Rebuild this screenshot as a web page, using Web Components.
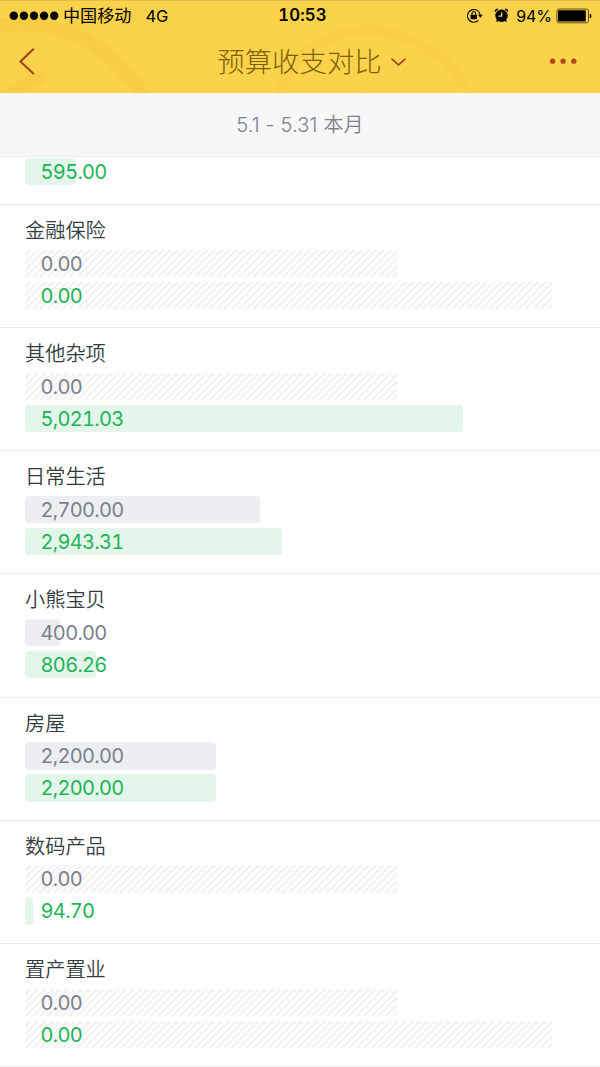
<!DOCTYPE html>
<html lang="zh-CN">
<head>
    <meta charset="UTF-8">
    <meta name="viewport" content="width=device-width, initial-scale=1.0">
    <title>预算收支对比</title>
    <style>
        body {
            margin: 0;
            height: 1067px;
            overflow: hidden;
            background-color: #fff;
            font-family: Inter, "Noto Sans CJK SC", sans-serif;
        }
    </style>
</head>
<body>
    <budget-page></budget-page>
    <script>
        class StatusBar extends HTMLElement {
            constructor() {
                super();
                this.attachShadow({ mode: 'open' });
                this.shadowRoot.innerHTML =
                    `<style>
                    :host {
                        display: grid;
                        grid-template-columns: 1fr auto 1fr;
                        align-items: center;
                        height: 31px;
                        padding: 0 8px 0 9px;
                        color: #000;
                        font-size: 16px;
                        line-height: 31px;
                    }
                    .left, .right { display: flex; align-items: center; }
                    .right { justify-content: flex-end; }
                    .carrier { margin-left: 4px; font-size: 17.1px; padding-top: 1px; line-height: 30px; }
                    .network { margin-left: 14px; font-size: 16.5px; padding-top: 1px; line-height: 30px; }
                    .time { padding: 0 0 0 4px; font-size: 16.8px; font-weight: 600; font-variant-numeric: tabular-nums; letter-spacing: .1px; }
                    .percent { margin: 0 4px 0 7px; padding-top: 1px; line-height: 30px; letter-spacing: -.05px; }
                    svg { display: block; flex: none; }
                    .clock { margin-left: 10px; }
                    </style>
                    <div class="left">
                        <svg width="50" height="10"><g><circle cx="4.8" cy="4.8" r="4.2"/><circle cx="14.9" cy="4.8" r="4.2"/><circle cx="25" cy="4.8" r="4.2"/><circle cx="35.1" cy="4.8" r="4.2"/><circle cx="45.2" cy="4.8" r="4.2"/></g></svg>
                        <span class="carrier">中国移动</span>
                        <span class="network">4G</span>
                    </div>
                    <div class="time">10:53</div>
                    <div class="right">
                        <svg width="18" height="16" viewBox="0 0 18 16">
                            <path d="M12.4 12.4A6.4 6.4 0 1 1 14.2 7" fill="none" stroke="#000" stroke-width="1.1"/>
                            <path d="M11.8 6.8H16.8L14.3 9.8Z"/>
                            <rect x="4.6" y="6.7" width="6.4" height="4.6" rx=".6"/>
                            <path d="M5.9 7V5.7a1.9 1.9 0 0 1 3.8 0V7" fill="none" stroke="#000" stroke-width="1.1"/>
                        </svg>
                        <svg class="clock" width="15" height="15" viewBox="0 0 15 15">
                            <circle cx="7.5" cy="7.8" r="6.2"/>
                            <path d="M1.2 3.6A3 3 0 0 1 4 1.2M13.8 3.6A3 3 0 0 0 11 1.2M3.8 12L2.6 13.7M11.2 12L12.4 13.7" fill="none" stroke="#000" stroke-width="1.4"/>
                            <path d="M7.7 4.2V8.2H4.4" fill="none" stroke="#fbd44d" stroke-width="1.3"/>
                        </svg>
                        <span class="percent">94%</span>
                        <svg width="36" height="16" viewBox="0 0 36 16">
                            <rect x=".9" y="1" width="31.6" height="13.8" rx="2" fill="none" stroke="#4b3e12" stroke-width=".9"/>
                            <rect x="2" y="2.2" width="27.8" height="11.4" rx="1"/>
                            <path d="M33.8 5.5a2.7 2.7 0 0 1 0 5z"/>
                        </svg>
                    </div>`;
            }
        }

        class NavBar extends HTMLElement {
            constructor() {
                super();
                this.attachShadow({ mode: 'open' });
                this.shadowRoot.innerHTML =
                    `<style>
                    :host {
                        display: grid;
                        grid-template-columns: 60px 1fr 60px;
                        align-items: center;
                        height: 62px;
                        color: #7d5f0b;
                    }
                    .title {
                        display: flex;
                        align-items: center;
                        justify-content: center;
                        padding-left: 24px;
                        font-size: 27.4px;
                        font-weight: 300;
                        line-height: 62px;
                    }
                    svg { display: block; fill: none; stroke: #a5401f; stroke-linecap: round; stroke-linejoin: round; }
                    .back { margin: -2px 0 0 18px; }
                    .arrow { margin-left: 8px; }
                    .more { fill: #b5431f; stroke: none; margin-left: 8px; }
                    </style>
                    <svg class="back" width="18" height="28" viewBox="0 0 18 28"><path d="M15.3 2.3L2.4 14.5L15.3 26.5" stroke-width="2.1"/></svg>
                    <div class="title"><slot></slot><svg class="arrow" width="17" height="10" viewBox="0 0 17 10"><path d="M2 2.2L8.6 7.8L15 2.2" stroke-width="1.7"/></svg></div>
                    <svg class="more" width="30" height="8"><circle cx="4.6" cy="3.2" r="2.6"/><circle cx="15.1" cy="3.2" r="2.6"/><circle cx="25.8" cy="3.2" r="2.6"/></svg>`;
            }
        }

        class PageHeader extends HTMLElement {
            constructor() {
                super();
                this.attachShadow({ mode: 'open' });
                this.shadowRoot.innerHTML =
                    `<style>
                    :host {
                        display: block;
                        position: relative;
                        height: 93px;
                        overflow: hidden;
                        background-color: #fbd34b;
                        box-shadow: inset 0 1px #e2bf49;
                    }
                    .rings { position: absolute; top: 0; left: 0; }
                    .content { position: relative; }
                    </style>
                    <svg class="rings" width="600" height="93" fill="none" stroke="#f6cb43" stroke-width="14" stroke-linecap="round" opacity=".65">
                        <path d="M-10 27C55 15 109 40 148 102"/>
                        <path d="M-5 101L41 77" stroke-width="13"/>
                        <path d="M279 100C296 8 432 8 471 99" stroke-width="10" opacity=".7"/>
                        <path d="M364 99Q373 76 395 79" stroke-width="8" opacity=".4"/>
                    </svg>
                    <div class="content"><slot></slot></div>`;
            }
        }

        class DateRange extends HTMLElement {
            constructor() {
                super();
                this.attachShadow({ mode: 'open' });
                this.shadowRoot.innerHTML =
                    `<style>
                    :host {
                        display: block;
                        box-sizing: border-box;
                        height: 64px;
                        border-bottom: 1px solid #ebebeb;
                        background-color: #f7f7f7;
                        color: #7b828d;
                        font-size: 20px;
                        font-weight: 350;
                        line-height: 65px;
                        text-align: center;
                        letter-spacing: .15px;
                    }
                    </style>
                    <slot></slot>`;
            }
        }

        class AmountBar extends HTMLElement {
            constructor() {
                super();
                this.attachShadow({ mode: 'open' });
                this.shadowRoot.innerHTML =
                    `<style>
                    :host {
                        display: grid;
                        grid-template-rows: 100%;
                        height: 27.4px;
                        color: #7a818c;
                        --fill: #edeef1;
                    }
                    :host([type="actual"]) { color: #1db458; --fill: #e4f5ea; }
                    .bar, .value { grid-area: 1 / 1; }
                    .bar {
                        width: var(--size);
                        border-radius: 4px;
                        background-color: var(--fill);
                    }
                    :host([empty]) .bar {
                        border-radius: 0;
                        background: repeating-linear-gradient(135deg, #fcfcfc 0 2.6px, #f0f0f0 3.6px 4.4px, #fcfcfc 5.2px);
                    }
                    .value {
                        padding-left: 15.6px;
                        font-size: 20px;
                        font-weight: 400;
                        line-height: 29px;
                        font-variant-numeric: tabular-nums;
                        letter-spacing: -.7px;
                    }
                    </style>
                    <div class="bar"></div>
                    <div class="value"><slot></slot></div>`;
            }
            connectedCallback() {
                this.style.setProperty('--size', this.getAttribute('size') + 'px');
            }
        }

        class BudgetRow extends HTMLElement {
            constructor() {
                super();
                this.attachShadow({ mode: 'open' });
                this.shadowRoot.innerHTML =
                    `<style>
                    :host {
                        display: flex;
                        flex-direction: column;
                        gap: 4.6px;
                        box-sizing: border-box;
                        height: 123.17px;
                        padding: 10px 25px 0;
                        border-bottom: 1px solid #ededed;
                    }
                    :host([partial]) { height: 48px; padding-top: 1px; }
                    :host([partial]) .name { display: none; }
                    .name {
                        height: 30px;
                        color: #343d3d;
                        font-size: 20.2px;
                        font-weight: 350;
                        line-height: 31px;
                    }
                    </style>
                    <div class="name"><slot name="name"></slot></div>
                    <slot></slot>`;
            }
        }

        class BudgetPage extends HTMLElement {
            constructor() {
                super();
                this.attachShadow({ mode: 'open' });
                this.shadowRoot.innerHTML =
                    `<style>
                    :host { display: block; width: 600px; }
                    </style>
                    <page-header>
                        <status-bar></status-bar>
                        <nav-bar>预算收支对比</nav-bar>
                    </page-header>
                    <date-range>5.1 - 5.31 本月</date-range>
                    <budget-row partial>
                        <amount-bar type="actual" size="51.4">595.00</amount-bar>
                    </budget-row>
                    <budget-row>
                        <span slot="name">金融保险</span>
                        <amount-bar empty size="372">0.00</amount-bar>
                        <amount-bar empty type="actual" size="527">0.00</amount-bar>
                    </budget-row>
                    <budget-row>
                        <span slot="name">其他杂项</span>
                        <amount-bar empty size="372">0.00</amount-bar>
                        <amount-bar type="actual" size="438">5,021.03</amount-bar>
                    </budget-row>
                    <budget-row>
                        <span slot="name">日常生活</span>
                        <amount-bar size="235.4">2,700.00</amount-bar>
                        <amount-bar type="actual" size="257">2,943.31</amount-bar>
                    </budget-row>
                    <budget-row>
                        <span slot="name">小熊宝贝</span>
                        <amount-bar size="35">400.00</amount-bar>
                        <amount-bar type="actual" size="71">806.26</amount-bar>
                    </budget-row>
                    <budget-row>
                        <span slot="name">房屋</span>
                        <amount-bar size="191.4">2,200.00</amount-bar>
                        <amount-bar type="actual" size="191.4">2,200.00</amount-bar>
                    </budget-row>
                    <budget-row>
                        <span slot="name">数码产品</span>
                        <amount-bar empty size="372">0.00</amount-bar>
                        <amount-bar type="actual" size="8">94.70</amount-bar>
                    </budget-row>
                    <budget-row>
                        <span slot="name">置产置业</span>
                        <amount-bar empty size="372">0.00</amount-bar>
                        <amount-bar empty type="actual" size="527">0.00</amount-bar>
                    </budget-row>`;
            }
        }

        customElements.define('status-bar', StatusBar);
        customElements.define('nav-bar', NavBar);
        customElements.define('page-header', PageHeader);
        customElements.define('date-range', DateRange);
        customElements.define('amount-bar', AmountBar);
        customElements.define('budget-row', BudgetRow);
        customElements.define('budget-page', BudgetPage);
    </script>
</body>
</html>
